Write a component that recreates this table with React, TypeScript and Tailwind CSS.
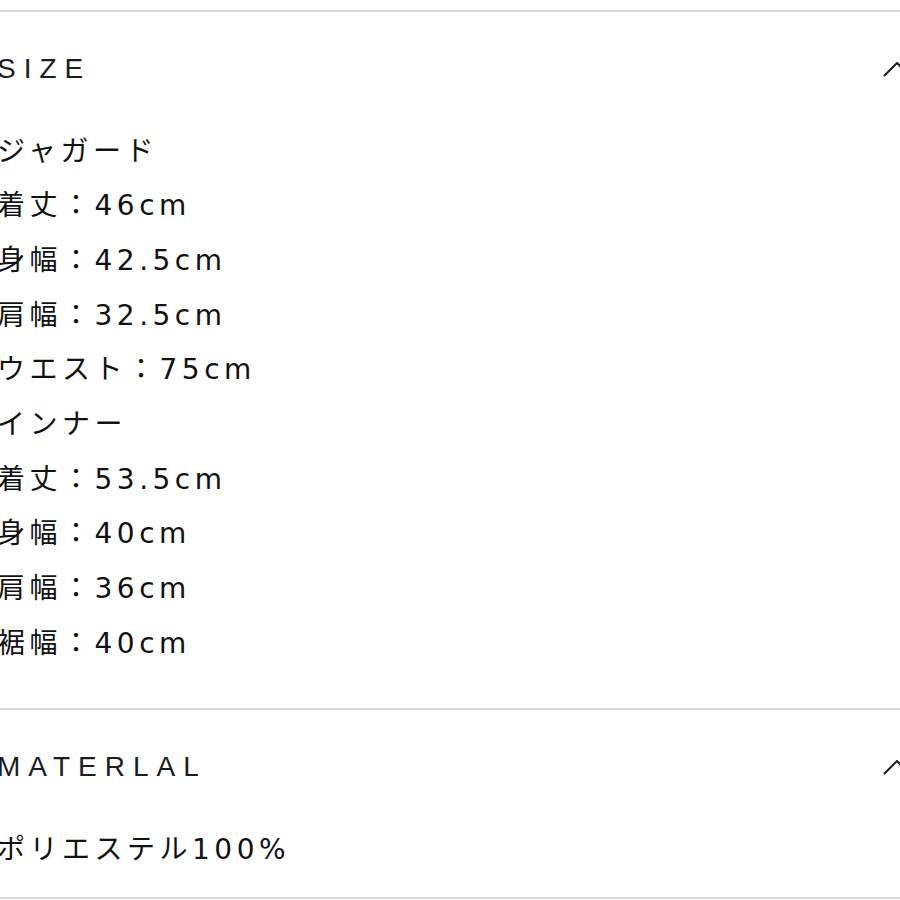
import React from "react";

const sizeRows = [
	"ジャガード",
	"着丈：46cm",
	"身幅：42.5cm",
	"肩幅：32.5cm",
	"ウエスト：75cm",
	"インナー",
	"着丈：53.5cm",
	"身幅：40cm",
	"肩幅：36cm",
	"裾幅：40cm",
];

const Chevron = () => (
	<svg width="28" height="16" viewBox="0 0 28 16" fill="none" className="shrink-0">
		<polyline
			points="1.5,14.5 14,2 26.5,14.5"
			stroke="#1c1c1c"
			strokeWidth="2"
			strokeLinecap="round"
			strokeLinejoin="round"
		/>
	</svg>
);

const Section = ({ title, children }: { title: string; children: React.ReactNode }) => (
	<div className="border-t-2 border-[#d8d8d8]">
		<div className="flex h-[111px] items-center justify-between pt-[3px]">
			<span
				className="text-[28px] leading-none tracking-[8px] text-[#1c1c1c]"
				style={{ fontFamily: '"Liberation Sans", sans-serif' }}
			>
				{title}
			</span>
			<Chevron />
		</div>
		{children}
	</div>
);

const body = "text-[28px] leading-[54.7px] tracking-[4.5px] text-[#111111]";

export default function App() {
	return (
		<div
			className="h-[900px] w-[900px] overflow-hidden bg-white"
			style={{ fontFamily: '"DejaVu Sans", "Noto Sans CJK JP", sans-serif' }}
		>
			<div className="ml-[-3px] mr-[-11px] pt-[10px]">
				<Section title="SIZE">
					<div className={`pt-[1.5px] pb-[36px] ${body}`}>
						{sizeRows.map((row, i) => (
							<div key={i}>{row}</div>
						))}
					</div>
				</Section>
				<Section title="MATERLAL">
					<div className={`pt-[2px] pb-[20px] ${body}`}>ポリエステル100%</div>
				</Section>
				<div className="border-t-2 border-[#d8d8d8]" />
			</div>
		</div>
	);
}
